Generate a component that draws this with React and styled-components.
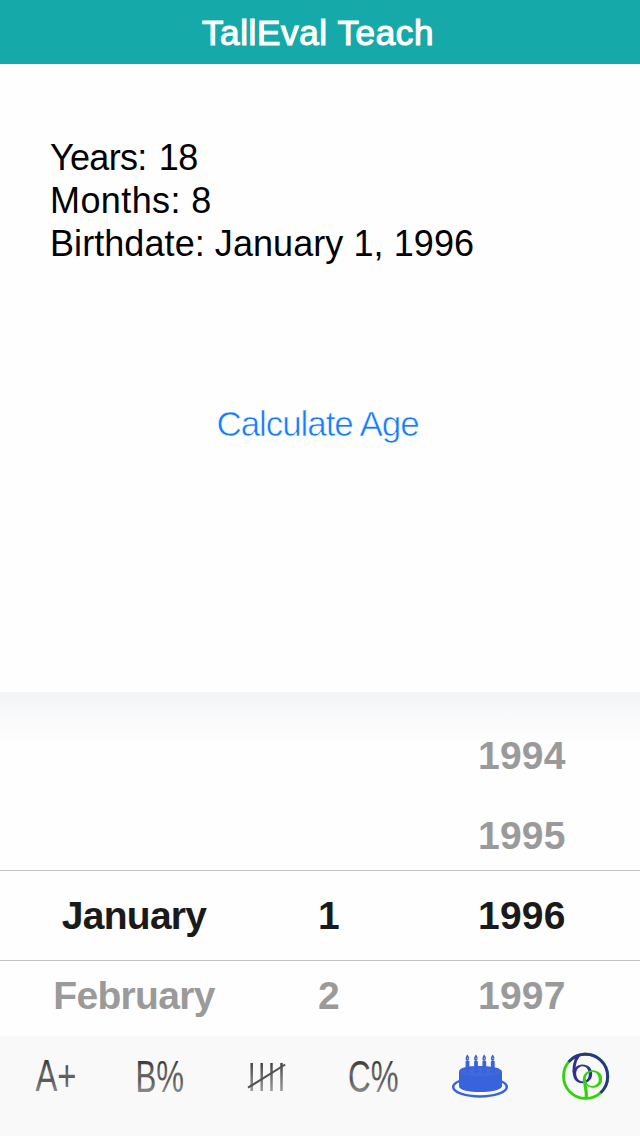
import React, { useState } from 'react';
import styled, { createGlobalStyle } from 'styled-components';

const GlobalStyle = createGlobalStyle`
  body {
    margin: 0;
    font-family: "Liberation Sans", Arial, sans-serif;
    background-color: #fefefe;
  }
`;

const Screen = styled.div`
  display: flex;
  flex-direction: column;
  width: 640px;
  height: 1136px;
  overflow: hidden;
  background-color: #fefefe;
`;

const Header = styled.header`
  display: flex;
  justify-content: center;
  height: 64px;
  padding-right: 4px;
  box-sizing: border-box;
  background-color: #15a9a9;
`;

const Title = styled.h1`
  margin: 0;
  font-size: 35px;
  font-weight: normal;
  line-height: 65px;
  letter-spacing: 0.65px;
  color: white;
  -webkit-text-stroke: 1.2px white;
  white-space: nowrap;
`;

const Content = styled.main`
  display: flex;
  flex-direction: column;
  align-items: center;
  height: 628px;
  padding: 72px 50px 0;
  box-sizing: border-box;
`;

const Result = styled.div`
  align-self: stretch;
  height: 266px;
  color: black;
`;

const ResultLine = styled.div`
  font-size: 36px;
  line-height: 43px;
  letter-spacing: ${props => props.$spacing || '0'};
  word-spacing: ${props => props.$wordSpacing || '0'};
  white-space: nowrap;
`;

const CalculateButton = styled.button`
  margin: 0 5px 0 0;
  padding: 0;
  border: none;
  background: none;
  font-family: inherit;
  font-size: 35px;
  line-height: 44px;
  letter-spacing: -1.07px;
  color: #127bff;
  -webkit-text-stroke: 0.6px #fefefe;
  cursor: pointer;
`;

const Picker = styled.section`
  height: 344px;
  padding-top: 23px;
  box-sizing: border-box;
  overflow: hidden;
  background: linear-gradient(#f3f4f6 0, #f4f6f8 10px, #f8f9fa 20px, #fbfbfb 34px, #fefefe 50px);
`;

const PickerRow = styled.div`
  display: grid;
  grid-template-columns: 268px 122px 250px;
  height: ${props => (props.$selected ? '91px' : '80px')};
  line-height: ${props => (props.$selected ? '90px' : '82px')};
  margin: ${props => (props.$selected ? '-5px 0 -6px' : '0')};
  box-sizing: border-box;
  border: solid #c3c3c3;
  border-width: ${props => (props.$selected ? '1px 0' : '0')};
  color: ${props => (props.$selected ? '#1a1a1a' : '#9a9a9a')};
`;

const PickerCell = styled.span`
  font-size: 39px;
  font-weight: bold;
  text-align: ${props => props.$align || 'center'};
  letter-spacing: ${props => props.$spacing || '0'};
  padding-left: ${props => props.$left || '0'};
`;

const TabBar = styled.nav`
  display: flex;
  height: 100px;
  background-color: #f9f9f9;
`;

const Tab = styled.button`
  width: ${props => props.$width}px;
  height: 100px;
  padding: 0;
  border: none;
  background: none;
  cursor: pointer;

  svg {
    display: block;
  }
`;

const rows = [
  { month: '', day: '', year: '1994' },
  { month: '', day: '', year: '1995' },
  { month: 'January', day: '1', year: '1996', selected: true },
  { month: 'February', day: '2', year: '1997' },
];

// Narrow lettering with a brushed metal fill
const LetterIcon = ({ id, width, x, y = 55, textWidth, children }) => (
  <svg width={width} height="100" viewBox={`0 0 ${width} 100`}>
    <defs>
      <linearGradient id={id} gradientUnits="userSpaceOnUse" x1="0" y1="23" x2="0" y2="56">
        <stop offset="0" stopColor="#333" />
        <stop offset="0.45" stopColor="#6b6b6b" />
        <stop offset="0.6" stopColor="#555" />
        <stop offset="1" stopColor="#8a8a8a" />
      </linearGradient>
    </defs>
    <text
      x={x}
      y={y}
      fontSize="45"
      textLength={textWidth}
      lengthAdjust="spacingAndGlyphs"
      fill={`url(#${id})`}
    >
      {children}
    </text>
  </svg>
);

const TallyIcon = () => (
  <svg width="107" height="100" viewBox="213 1036 107 100" fill="none">
    <defs>
      <linearGradient id="tally" gradientUnits="userSpaceOnUse" x1="0" y1="1063" x2="0" y2="1091">
        <stop offset="0" stopColor="#444" />
        <stop offset="0.55" stopColor="#777" />
        <stop offset="1" stopColor="#999" />
      </linearGradient>
    </defs>
    <path d="M251.7 1063v28M261.7 1063v28M271.5 1063v28M281.5 1063v28" stroke="url(#tally)" strokeWidth="2.5" />
    <path d="M248 1087.7L285.2 1064.5" stroke="#505050" strokeWidth="2" />
  </svg>
);

const CakeIcon = () => (
  <svg width="107" height="100" viewBox="426 1036 107 100">
    <ellipse cx="480" cy="1087" rx="26.8" ry="9.4" fill="#f9f9f9" stroke="#3863dc" strokeWidth="2.5" />
    <path d="M459 1072c0-5 9-6 21-6s22 2 22 6v14.5c-2 4-11 5.5-22 5.5s-20-1.5-21-5.5z" fill="#3863dc" />
    <ellipse cx="480.5" cy="1072" rx="19" ry="4.5" fill="#4169dc" />
    {[467.5, 476, 484.3, 492.8].map(x => (
      <g key={x} fill="#3863dc">
        <rect x={x - 1.9} y="1061" width="3.8" height="12" rx="0.6" />
        <path d={`M${x - 0.2} 1054.5c2.6 2.5 2.2 6-0.1 6.5c-2.5-1-1.8-4 .1-6.5z`} />
        <circle cx={x + 0.1} cy="1058.4" r="0.65" fill="#b9c8f2" />
      </g>
    ))}
  </svg>
);

const LogoIcon = () => (
  <svg width="107" height="100" viewBox="533 1036 107 100" fill="none">
    <circle cx="585.7" cy="1076.2" r="22.2" stroke="#33d30c" strokeWidth="2.8" />
    <path d="M568.7 1061.9A22.2 22.2 0 1 1 600.6 1092.7" stroke="#2e3192" strokeWidth="2.9" />
    <path d="M578.5 1055.5C574 1061 573.2 1070 574.6 1075" stroke="#2e3192" strokeWidth="3" />
    <path
      fill="#2e3192"
      fillRule="evenodd"
      d="M582.4 1064.6C588.3 1064.6 592.2 1068.5 592.2 1073.8C592.2 1079.5 588.2 1083.2 582.5 1083.2C576.5 1083.2 573 1079 573 1073.2C573.4 1068.5 577 1064.6 582.4 1064.6zM582 1066.3C578.5 1067 575.9 1070 576.2 1074C576.5 1078.5 579 1081.3 583 1081.3C586.8 1081 588.9 1078 588.8 1074C588.7 1069 586 1066 582 1066.3z"
    />
    <path d="M584.5 1079C584.5 1087 587 1090 586.3 1097.5" stroke="#33d30c" strokeWidth="3.2" />
    <path
      fill="#33d30c"
      fillRule="evenodd"
      d="M592.6 1070.2C598.5 1070.2 602.2 1074 602.2 1079C602.2 1084.5 598 1087.8 592.5 1087.8C590 1087.8 587.5 1086.5 586.5 1085L583.2 1083C581.5 1075 586 1070.2 592.6 1070.2zM592 1072C588 1072.5 585.5 1075.5 585.7 1079.5C586 1083.5 588.5 1085.9 592.3 1085.9C596.5 1085.5 598.9 1083 598.8 1079C598.5 1074.5 596 1071.7 592 1072z"
    />
  </svg>
);

const App = () => {
  const [result, setResult] = useState({ years: 18, months: 8 });

  const calculateAge = () => {
    setResult({ years: 18, months: 8 });
  };

  return (
    <>
      <GlobalStyle />
      <Screen>
        <Header>
          <Title>TallEval Teach</Title>
        </Header>
        <Content>
          <Result>
            <ResultLine $spacing="-0.7px" $wordSpacing="3px">Years: {result.years}</ResultLine>
            <ResultLine $spacing="0.4px">Months: {result.months}</ResultLine>
            <ResultLine $spacing="0.07px">Birthdate: January 1, 1996</ResultLine>
          </Result>
          <CalculateButton onClick={calculateAge}>Calculate Age</CalculateButton>
        </Content>
        <Picker>
          {rows.map(row => (
            <PickerRow key={row.year} $selected={row.selected}>
              <PickerCell $spacing="-0.7px">{row.month}</PickerCell>
              <PickerCell $align="left" $left="50px">{row.day}</PickerCell>
              <PickerCell $align="left" $left="88px" $spacing="0.2px">{row.year}</PickerCell>
            </PickerRow>
          ))}
        </Picker>
        <TabBar>
          <Tab $width={107} aria-label="Grades">
            <LetterIcon id="metal-a" width={107} x={35.5} textWidth={41}>A+</LetterIcon>
          </Tab>
          <Tab $width={106} aria-label="Percent">
            <LetterIcon id="metal-b" width={106} x={28.5} y={56} textWidth={48.5}>B%</LetterIcon>
          </Tab>
          <Tab $width={107} aria-label="Tally"><TallyIcon /></Tab>
          <Tab $width={106} aria-label="Curve">
            <LetterIcon id="metal-c" width={106} x={28} y={56} textWidth={50.5}>C%</LetterIcon>
          </Tab>
          <Tab $width={107} aria-label="Birthday"><CakeIcon /></Tab>
          <Tab $width={107} aria-label="About"><LogoIcon /></Tab>
        </TabBar>
      </Screen>
    </>
  );
};

export default App;
